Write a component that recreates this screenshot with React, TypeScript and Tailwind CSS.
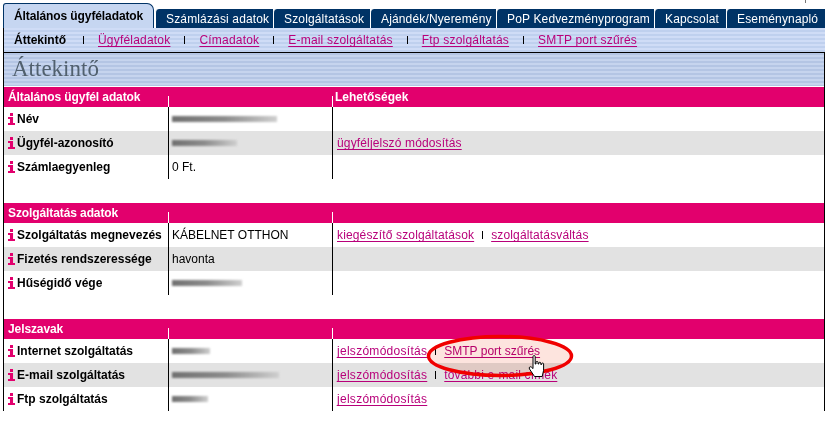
import type { ReactNode } from "react";

const LINK = "text-[#b8007a] underline underline-offset-2";

function Info() {
  return (
    <span className="mr-[2px] flex h-[12px] w-[7px] shrink-0 flex-col items-center">
      <span className="mb-px h-[3px] w-[3px] bg-[#e2006d]" />
      <span className="h-[8px] w-[7px] bg-[#e2006d] [clip-path:polygon(0_0,72%_0,72%_75%,100%_75%,100%_100%,0_100%,0_75%,28%_75%,28%_25%,0_25%)]" />
    </span>
  );
}

function Smudge({ w }: { w: number }) {
  return (
    <span
      className="block h-[6px] bg-gradient-to-r from-[#707070] via-[#8c8c8c] to-[#cfcfcf] blur-[1px]"
      style={{ width: w }}
    />
  );
}

function Sep({ className }: { className: string }) {
  return <span className={`inline-block h-[8px] w-px shrink-0 bg-black ${className}`} />;
}

type Row = { label: string; value?: ReactNode; links?: string[] };

function Section({ title, right, rows }: { title: string; right?: string; rows: Row[] }) {
  return (
    <section className="mb-6">
      <div className="flex h-5 bg-[#e2006d] text-xs font-bold text-white">
        <div className="w-[164px] pl-1 pt-[2px] tracking-[-0.1px]">{title}</div>
        <div className="mt-[9px] w-px bg-white" />
        <div className="w-[163px]" />
        <div className="mt-[9px] w-px bg-white" />
        <div className="pl-[2px] pt-[2px]">{right}</div>
      </div>
      {rows.map((r, i) => (
        <div key={r.label} className={`flex h-6 text-xs ${i === 1 ? "bg-[#e2e2e2]" : "bg-white"}`}>
          <div className="flex w-[164px] items-center pl-1 font-bold whitespace-nowrap text-black">
            <Info />
            {r.label}
          </div>
          <div className="w-px bg-black" />
          <div className="flex w-[163px] items-center pl-[3px] text-black">{r.value}</div>
          <div className="w-px bg-black" />
          <div className="flex items-center pl-1 tracking-[0.15px]">
            {r.links?.map((l, j) => (
              <span key={l} className="flex items-center">
                {j > 0 && <Sep className="mx-2" />}
                <a
                  className={`${LINK} ${
                    l === "jelszómódosítás" ? "tracking-[0.28px]" : l === "SMTP port szűrés" ? "tracking-normal" : ""
                  }`}
                >
                  {l}
                </a>
              </span>
            ))}
          </div>
        </div>
      ))}
    </section>
  );
}

const TABS = [
  ["Számlázási adatok", "w-[118px]"],
  ["Szolgáltatások", "w-[97px]"],
  ["Ajándék/Nyeremény", "w-[126px]"],
  ["PoP Kedvezményprogram", "w-[158px]"],
  ["Kapcsolat", "w-[72px]"],
  ["Eseménynapló", "w-[99px]"],
];

const SUB = ["Ügyféladatok", "Címadatok", "E-mail szolgáltatás", "Ftp szolgáltatás", "SMTP port szűrés"];

export default function App() {
  return (
    <div className="relative h-[430px] w-[828px] overflow-hidden bg-white font-['Liberation_Sans',Arial,sans-serif]">
      <span className="absolute top-0 left-[805px] h-[3px] w-px bg-[#777777]" />
      <div className="ml-[3px] w-[822px]">
        <nav className="flex h-[28px] items-end">
          <div className="mr-px flex h-[25px] w-[151px] items-center rounded-tl-[3px] rounded-tr-[7px] border-t border-r border-l border-[#003366] bg-[#c6d6f1] pl-[10px] text-xs font-bold tracking-[-0.1px] text-black">
            Általános ügyféladatok
          </div>
          {TABS.map(([t, w]) => (
            <div
              key={t}
              className={`flex h-[19px] items-center rounded-tl-[4px] border-l border-white bg-[#003366] pl-[10px] text-xs tracking-[0.15px] whitespace-nowrap text-white ${w}`}
            >
              {t}
            </div>
          ))}
        </nav>
        <div className="flex h-[25px] items-center border-b border-l border-black bg-[repeating-linear-gradient(180deg,#cfdcf6_0,#cfdcf6_2px,#bfd0ee_2px,#bfd0ee_4px)] pl-[10px] text-xs tracking-[0.2px]">
          <span className="font-bold tracking-normal text-black">Áttekintő</span>
          <Sep className="mr-[14px] ml-[17px]" />
          {SUB.map((s, i) => (
            <span key={s} className="flex items-center">
              {i > 0 && <Sep className="mx-[14px]" />}
              <a className={LINK}>{s}</a>
            </span>
          ))}
        </div>
        <div className="border-x border-black">
          <div className="flex h-[33px] items-center bg-[repeating-linear-gradient(180deg,#b4c5e4_0,#b4c5e4_2px,#c6d4ee_2px,#c6d4ee_4px)] pl-[8px] font-['Liberation_Serif',serif] text-[23px] text-[#51606e]">
            Áttekintő
          </div>
          <div className="h-px bg-white" />
          <Section
            title="Általános ügyfél adatok"
            right="Lehetőségek"
            rows={[
              { label: "Név", value: <Smudge w={105} /> },
              { label: "Ügyfél-azonosító", value: <Smudge w={65} />, links: ["ügyféljelszó módosítás"] },
              { label: "Számlaegyenleg", value: "0 Ft." },
            ]}
          />
          <Section
            title="Szolgáltatás adatok"
            rows={[
              { label: "Szolgáltatás megnevezés", value: "KÁBELNET OTTHON", links: ["kiegészítő szolgáltatások", "szolgáltatásváltás"] },
              { label: "Fizetés rendszeressége", value: "havonta" },
              { label: "Hűségidő vége", value: <Smudge w={70} /> },
            ]}
          />
          <Section
            title="Jelszavak"
            rows={[
              { label: "Internet szolgáltatás", value: <Smudge w={38} />, links: ["jelszómódosítás", "SMTP port szűrés"] },
              { label: "E-mail szolgáltatás", value: <Smudge w={107} />, links: ["jelszómódosítás", "további e-mail címek"] },
              { label: "Ftp szolgáltatás", value: <Smudge w={36} />, links: ["jelszómódosítás"] },
            ]}
          />
        </div>
      </div>
      <svg className="absolute top-[328px] left-[420px]" width="160" height="56" viewBox="0 0 160 56">
        <ellipse cx="80" cy="28" rx="71.5" ry="19.5" fill="#fde4de" className="mix-blend-multiply" />
        <ellipse cx="80" cy="28" rx="71.5" ry="19.5" fill="none" stroke="#f00000" strokeWidth="3.5" />
      </svg>
      <svg className="absolute top-[355px] left-[528px]" width="19" height="23" viewBox="0 0 19 23">
        <path
          d="M5 1.5c0-1.2 2.2-1.2 2.2 0V9h.8V7.2c0-1 2-1 2 0V9h.8V8c0-1 2-1 2 0v1.5h.8v-.7c0-1 2-1 2 0v6.5l-1.4 6.2H6.5L1.5 14c-1-1.5.7-3 2-1.8L5 13.6V1.5z"
          fill="#fff"
          stroke="#000"
          strokeWidth="1"
        />
      </svg>
    </div>
  );
}
